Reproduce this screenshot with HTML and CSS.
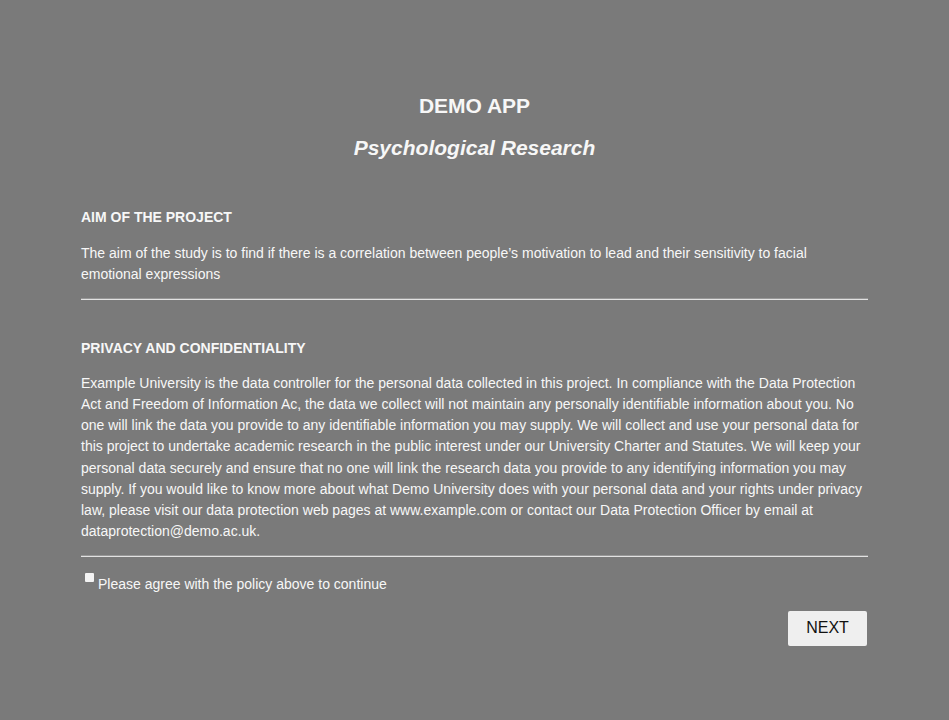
FILE: index.html
```html
<!DOCTYPE html>
<html lang="en">
<head>
<meta charset="utf-8">
<title>Demo App</title>
<link rel="stylesheet" href="styles.css">
</head>
<body>
<main class="page">
  <header class="header">
    <h1 class="title">DEMO APP</h1>
    <h2 class="subtitle">Psychological Research</h2>
  </header>
  <section class="section">
    <h3 class="section-title">AIM OF THE PROJECT</h3>
    <p class="text">The aim of the study is to find if there is a correlation between people’s motivation to lead and their sensitivity to facial emotional expressions</p>
  </section>
  <hr class="rule">
  <section class="section section-privacy">
    <h3 class="section-title">PRIVACY AND CONFIDENTIALITY</h3>
    <p class="text">Example University is the data controller for the personal data collected in this project. In compliance with the Data Protection Act and Freedom of Information Ac, the data we collect will not maintain any personally identifiable information about you. No one will link the data you provide to any identifiable information you may supply. We will collect and use your personal data for this project to undertake academic research in the public interest under our University Charter and Statutes. We will keep your personal data securely and ensure that no one will link the research data you provide to any identifying information you may supply. If you would like to know more about what Demo University does with your personal data and your rights under privacy law, please visit our data protection web pages at www.example.com or contact our Data Protection Officer by email at dataprotection@demo.ac.uk.</p>
  </section>
  <hr class="rule">
  <label class="agree">
    <input type="checkbox" class="check">
    <span>Please agree with the policy above to continue</span>
  </label>
  <div class="actions">
    <button class="next" type="button">NEXT</button>
  </div>
</main>
</body>
</html>
```

FILE: styles.css
```css
html, body {
  margin: 0;
  padding: 0;
  background: #7a7a7a;
}
body {
  font-family: "Liberation Sans", Arial, sans-serif;
  color: #f7f7f7;
}
.page {
  width: 787px;
  margin: 0 auto;
  box-sizing: border-box;
}
.header {
  text-align: center;
  padding-top: 94px;
}
.title {
  margin: 0;
  font-size: 21px;
  font-weight: bold;
  line-height: 24px;
}
.subtitle {
  margin: 17px 0 0;
  font-size: 21px;
  font-style: italic;
  font-weight: bold;
  line-height: 26px;
}
.section {
  margin-top: 47px;
}
.section-privacy {
  margin-top: 39px;
}
.section-title {
  margin: 0;
  font-size: 14px;
  font-weight: bold;
  line-height: 18px;
}
.text {
  margin: 17px 0 0;
  font-size: 14px;
  line-height: 21.1px;
}
.section-privacy .text {
  margin-top: 16px;
}
.rule {
  margin: 13px 0 0;
  height: 0;
  border: 0;
  border-top: 1px solid #979797;
  border-bottom: 1px solid #e2e2e2;
}
.agree {
  display: flex;
  align-items: flex-start;
  margin-top: 15px;
  font-size: 14px;
  line-height: 20px;
}
.check {
  appearance: none;
  -webkit-appearance: none;
  width: 9px;
  height: 9px;
  margin: 1px 4px 0 4px;
  background: #f3f3f3;
  border-radius: 1px;
  border: 0;
  flex: none;
}
.agree span {
  margin-top: 2px;
}
.actions {
  display: flex;
  justify-content: flex-end;
  margin-top: 17px;
  padding-right: 1px;
}
.next {
  width: 79px;
  height: 35px;
  background: #efefef;
  color: #111;
  border: 0;
  border-radius: 2px;
  font-family: "Liberation Sans", Arial, sans-serif;
  font-size: 16px;
  padding: 0;
}
```
